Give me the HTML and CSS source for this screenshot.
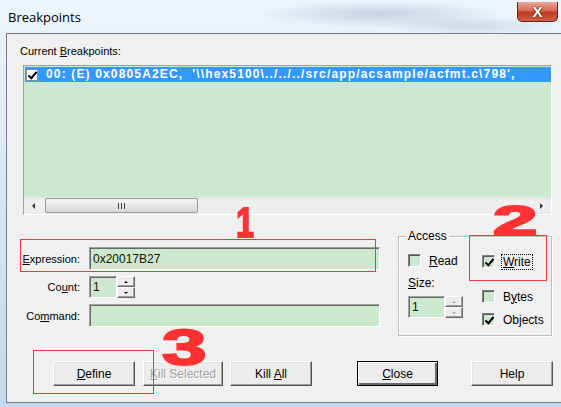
FILE: index.html
```html
<!DOCTYPE html>
<html lang="en">
<head>
  <meta charset="UTF-8">
  <title>Breakpoints</title>
  <link rel="stylesheet" href="styles.css">
</head>
<body>
  <div class="window">
    <div class="titlebar">
      <span class="title">Breakpoints</span>
      <span class="close-btn">X</span>
    </div>
    <div class="frame">
      <div class="panel">
        <div class="caption">Current <u>B</u>reakpoints:</div>
        <div class="listbox">
          <div class="rows">
            <div class="row selected">
              <span class="row-check"></span>
              <span class="row-text">00: (E) 0x0805A2EC,&nbsp; '\\hex5100\../../../src/app/acsample/acfmt.c\798',</span>
            </div>
          </div>
          <div class="hscroll">
            <span class="scroll-btn"><span class="tri-left"></span></span>
            <span class="track"><span class="thumb"><span class="grip"></span></span></span>
            <span class="scroll-btn"><span class="tri-right"></span></span>
          </div>
        </div>

        <div class="lower">
          <div class="fields">
            <div class="field">
              <label><u>E</u>xpression:</label>
              <div class="input wide">0x20017B27</div>
            </div>
            <div class="field count">
              <label>Co<u>u</u>nt:</label>
              <div class="input narrow">1</div>
              <div class="spin">
                <span class="spin-half"><span class="tri-up"></span></span>
                <span class="spin-half"><span class="tri-down"></span></span>
              </div>
            </div>
            <div class="field command">
              <label>Co<u>m</u>mand:</label>
              <div class="input wide"></div>
            </div>
          </div>

          <fieldset class="access">
            <legend>Access</legend>
            <div class="access-grid">
              <div class="col">
                <div class="check-row"><span class="box"></span><span class="check-label"><u>R</u>ead</span></div>
                <div class="size-label"><u>S</u>ize:</div>
                <div class="size-spin">
                  <div class="input size">1</div>
                  <div class="spin grey">
                    <span class="spin-half"><span class="tri-up"></span></span>
                    <span class="spin-half"><span class="tri-down"></span></span>
                  </div>
                </div>
              </div>
              <div class="col">
                <div class="check-row write"><span class="box checked"></span><span class="check-label focus"><u>W</u>rite</span></div>
                <div class="check-row bytes"><span class="box"></span><span class="check-label">B<u>y</u>tes</span></div>
                <div class="check-row objects"><span class="box checked"></span><span class="check-label">Ob<u>j</u>ects</span></div>
              </div>
            </div>
          </fieldset>
        </div>

        <div class="buttons">
          <span class="button define"><span><u>D</u>efine</span></span>
          <span class="button kill-sel disabled"><span><u>K</u>ill Selected</span></span>
          <span class="button kill-all"><span>Kill <u>A</u>ll</span></span>
          <span class="button close default"><span><u>C</u>lose</span></span>
          <span class="button help"><span>Help</span></span>
        </div>
      </div>
    </div>

    <!-- red annotations drawn over the dialog -->
    <div class="mark-box box-1"></div>
    <div class="mark-box box-2"></div>
    <div class="mark-box box-3"></div>
    <span class="scribble one">1</span>
    <span class="scribble two">2</span>
    <span class="scribble three">3</span>
  </div>
</body>
</html>
```

FILE: styles.css
```css
:root {
  --face: #f0f0f0;
  --field: #cce8cf;
  --select: #3399ff;
  --shadow: #a0a0a0;
  --dark: #696969;
  --mark: #ff3232;
}
* {
  box-sizing: border-box;
  margin: 0;
  padding: 0;
}
body {
  width: 561px;
  height: 407px;
  overflow: hidden;
  font-family: "Liberation Sans", Arial, sans-serif;
  font-size: 11px;
  color: #000;
  background: #c9daeb;
}
.window {
  position: relative;
  width: 561px;
  height: 407px;
  display: flex;
  flex-direction: column;
  background:
    radial-gradient(ellipse 120px 14px at 380px 14px, rgba(150,170,195,0.45), transparent),
    radial-gradient(ellipse 90px 10px at 470px 26px, rgba(150,170,195,0.35), transparent),
    linear-gradient(180deg, #eef4fb 0%, #d9e6f3 45%, #c6d8eb 100%);
}
.titlebar {
  height: 33px;
  display: flex;
  justify-content: space-between;
  align-items: flex-start;
}
.title {
  font-family: "Open Sans", sans-serif;
  font-size: 13px;
  line-height: 18px;
  padding: 8px 0 0 8px;
}
.close-btn {
  width: 41px;
  height: 20px;
  margin: 2px 3px 0 0;
  border: 1px solid #5c2a24;
  border-top: none;
  border-radius: 0 0 5px 5px;
  background: linear-gradient(180deg, #e9a99c 0%, #d46a55 45%, #c0391f 55%, #d0604a 100%);
  color: #fff;
  font-weight: 700;
  font-size: 15px;
  line-height: 19px;
  text-align: center;
  text-shadow: 0 0 2px #4a1a10, 0 0 1px #4a1a10;
}
.frame {
  flex: 1;
  display: flex;
  padding: 0 0 4px 6px;
}
.panel {
  flex: 1;
  background: var(--face);
  border-top: 1px solid #6f7f90;
  border-left: 1px solid #6f7f90;
  border-bottom: 1px solid #6f7f90;
  padding-top: 10px;
}
.caption {
  padding-left: 13px;
  line-height: 14px;
  height: 14px;
}
.listbox {
  margin: 7px 0 0 16px;
  width: 529px;
  height: 150px;
  display: flex;
  flex-direction: column;
  border: 1px solid;
  border-color: var(--shadow) #fff #fff var(--shadow);
  box-shadow: inset 1px 1px var(--dark);
}
.rows {
  flex: 1;
  background: var(--field);
  padding: 1px 0 0 1px;
}
.row {
  height: 15px;
  display: flex;
  align-items: center;
}
.row.selected {
  background: var(--select);
}
.row-check {
  position: relative;
  width: 12px;
  height: 12px;
  margin-left: 1px;
  background: #fff;
  border: 1px solid #8f8f8f;
}
.row-check::after,
.box.checked::after {
  content: "";
  position: absolute;
  left: 3px;
  top: 0;
  width: 3px;
  height: 7px;
  border: solid #000;
  border-width: 0 2px 2px 0;
  transform: rotate(40deg);
}
.row-text {
  margin-left: 8px;
  color: #fff;
  font-weight: 700;
  font-size: 12px;
  letter-spacing: 1.15px;
  line-height: 15px;
  white-space: nowrap;
}
.hscroll {
  height: 17px;
  display: flex;
  background: linear-gradient(180deg, #e4e4e4, #f0f0f0 30%, #ececec);
}
.scroll-btn {
  width: 19px;
  display: flex;
  align-items: center;
  justify-content: center;
}
.tri-left {
  border: 3px solid transparent;
  border-left: none;
  border-right: 3px solid #333;
}
.tri-right {
  border: 3px solid transparent;
  border-right: none;
  border-left: 3px solid #333;
}
.track {
  flex: 1;
  padding: 1px 0 1px 2px;
}
.thumb {
  width: 153px;
  height: 15px;
  display: flex;
  align-items: center;
  justify-content: center;
  border: 1px solid #9a9a9a;
  border-radius: 2px;
  background: linear-gradient(180deg, #f6f6f6, #e6e6e6 50%, #d8d8d8);
}
.grip {
  width: 7px;
  height: 6px;
  background: repeating-linear-gradient(90deg, #444 0 1px, transparent 1px 3px);
}
.lower {
  display: flex;
  align-items: flex-start;
}
.fields {
  width: 373px;
  margin-top: 32px;
}
.field {
  display: flex;
  align-items: center;
  height: 23px;
}
.field.count {
  height: 22px;
  margin-top: 6px;
}
.field.command {
  margin-top: 6px;
}
.field label {
  width: 75px;
  padding-right: 2px;
  text-align: right;
  margin-right: 7px;
}
.input {
  height: 100%;
  background: var(--field);
  border: 1px solid;
  border-color: var(--shadow) #fff #fff var(--shadow);
  box-shadow: inset 1px 1px var(--dark);
  padding: 0 3px;
  display: flex;
  align-items: center;
  font-size: 12px;
  color: #1a1400;
}
.input.wide {
  width: 291px;
}
.input.narrow {
  width: 28px;
}
.spin {
  width: 18px;
  height: 100%;
  display: flex;
  flex-direction: column;
}
.spin-half {
  flex: 1;
  display: flex;
  align-items: center;
  justify-content: center;
  background: #ececec;
  border: 1px solid;
  border-color: #fff var(--dark) var(--dark) #fff;
  box-shadow: inset -1px -1px var(--shadow);
}
.tri-up {
  border: 2px solid transparent;
  border-top: none;
  border-bottom: 2px solid #111;
}
.tri-down {
  border: 2px solid transparent;
  border-bottom: none;
  border-top: 2px solid #111;
}
.spin.grey .tri-up { border-bottom-color: #a8a8a8; }
.spin.grey .tri-down { border-top-color: #a8a8a8; }
.access {
  margin: 14px 0 0 18px;
  width: 154px;
  height: 107px;
  min-inline-size: 0;
  border: 1px solid #bdbdbd;
  box-shadow: 1px 1px #fff, inset 1px 1px #fff;
  padding: 11px 0 0 9px;
}
.access legend {
  margin-left: -2px;
  padding: 0 2px;
  font-size: 12px;
  line-height: 14px;
}
.access-grid {
  display: grid;
  grid-template-columns: 74px 1fr;
}
.check-row {
  display: flex;
  align-items: center;
  height: 13px;
  font-size: 12px;
}
.check-row.write {
  margin-top: 1px;
}
.check-row.bytes {
  margin-top: 22px;
}
.check-row.objects {
  margin-top: 10px;
}
.box {
  position: relative;
  width: 13px;
  height: 13px;
  background: var(--field);
  border: 1px solid;
  border-color: #808080 #fff #fff #808080;
  box-shadow: inset 1px 1px #5a5a5a;
}
.box.checked::after {
  left: 4px;
  top: 1px;
}
.check-label {
  margin-left: 8px;
  line-height: 14px;
}
.check-label.focus {
  outline: 1px dotted #000;
  outline-offset: 0;
  padding: 0 1px;
  margin-left: 7px;
}
.size-label {
  margin-top: 9px;
  line-height: 14px;
  font-size: 12px;
}
.size-spin {
  margin-top: 6px;
  display: flex;
  height: 22px;
}
.input.size {
  width: 37px;
}
.buttons {
  display: flex;
  margin-top: 25px;
  padding-left: 46px;
}
.button {
  height: 25px;
  display: flex;
  align-items: center;
  justify-content: center;
  background: #ececec;
  border: 1px solid;
  border-color: #fff #555 #555 #fff;
  box-shadow: inset -1px -1px var(--shadow), inset 1px 1px #e3e3e3;
  font-size: 12px;
  white-space: nowrap;
}
.button.define { width: 82px; }
.button.kill-sel { width: 80px; margin-left: 8px; }
.button.kill-all { width: 82px; margin-left: 7px; }
.button.close { width: 81px; margin-left: 45px; }
.button.help { width: 82px; margin-left: 33px; }
.button.disabled {
  color: #a0a0a0;
  text-shadow: 1px 1px #fff;
}
.button.default {
  border: 1px solid #000;
  box-shadow: inset 1px 1px #fff, inset -2px -2px #696969;
}
.mark-box {
  position: absolute;
  border: 1px solid #f03a3a;
}
.box-1 { left: 20px; top: 239px; width: 356px; height: 33px; }
.box-2 { left: 469px; top: 235px; width: 78px; height: 46px; }
.box-3 { left: 33px; top: 350px; width: 121px; height: 44px; }
.scribble {
  position: absolute;
  color: var(--mark);
  font-family: "Liberation Sans", sans-serif;
  font-weight: 700;
  line-height: 1;
  transform-origin: 0 0;
  -webkit-text-stroke: 2px var(--mark);
}
.scribble.one {
  left: 236px;
  top: 201px;
  font-size: 43px;
  transform: scaleX(0.75);
}
.scribble.two {
  left: 493px;
  top: 200px;
  font-size: 42px;
  transform: scaleX(1.9);
}
.scribble.three {
  left: 162px;
  top: 323px;
  font-size: 50px;
  transform: scaleX(1.6);
}
```
